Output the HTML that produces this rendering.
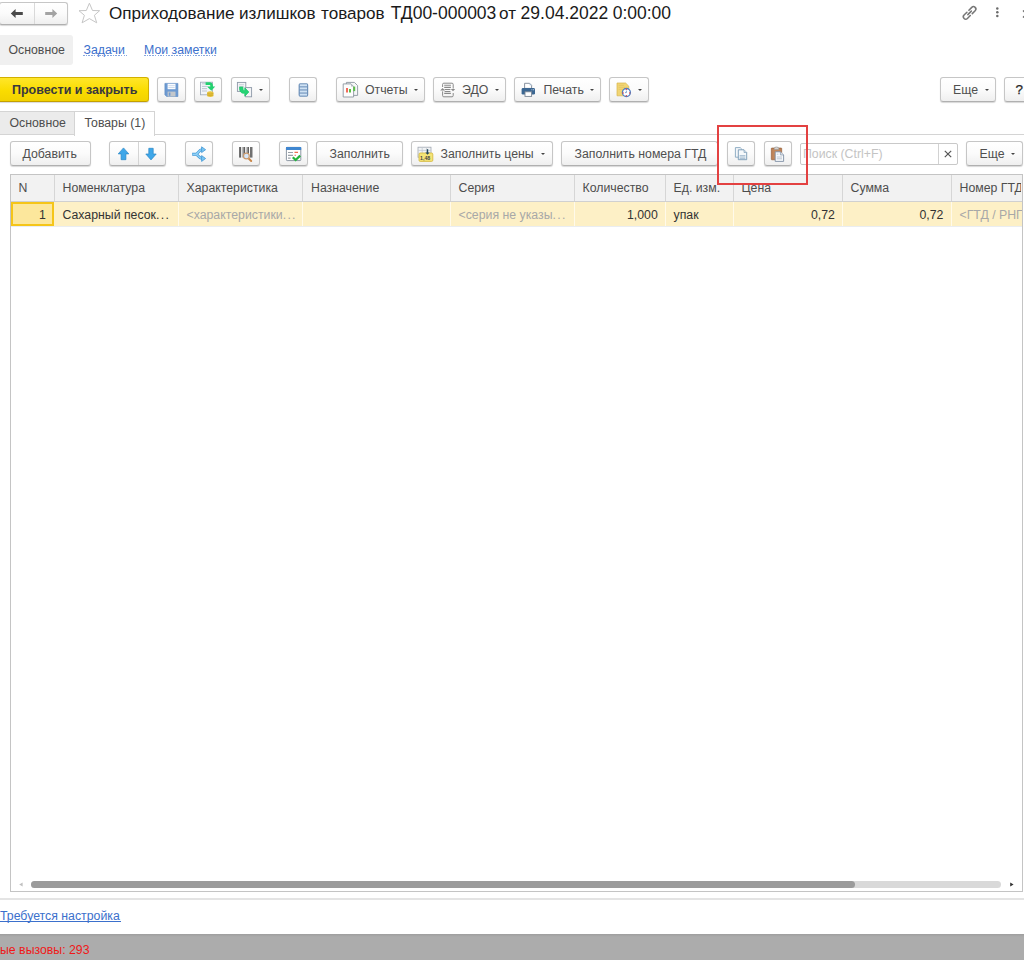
<!DOCTYPE html>
<html><head><meta charset="utf-8">
<style>
*{box-sizing:border-box;margin:0;padding:0}
html,body{width:1024px;height:960px;overflow:hidden;background:#fff}
body{position:relative;font-family:"Liberation Sans",sans-serif;font-size:12.3px;color:#4d4d4d}
.a{position:absolute;white-space:nowrap}
.t{position:absolute;white-space:nowrap;line-height:1}
.btn{position:absolute;height:25px;border:1px solid #c6c6c6;border-bottom-color:#b0b0b0;border-radius:3px;
 background:linear-gradient(#ffffff 0%,#fbfbfb 50%,#efefef 100%);box-shadow:0 1px 1px rgba(0,0,0,.16)}
.btn .lbl{position:absolute;top:0;line-height:24px;color:#4f4f4f}
.dd{position:absolute;width:0;height:0;border-left:2.2px solid transparent;border-right:2.2px solid transparent;border-top:2.6px solid #444}
.ic{position:absolute;overflow:visible}
.vl{position:absolute;width:1px;background:#dadada}
</style></head><body>
<!-- ===== Title bar ===== -->
<div class="btn" style="left:-1px;top:2px;width:69px;height:23px;border-radius:3px"></div>
<div class="vl" style="left:34px;top:3px;height:21px;background:#d9d9d9"></div>
<svg class="ic" style="left:10px;top:8px" width="14" height="11" viewBox="0 0 14 11"><path d="M.8 5.5 L5.6 1 V4.1 H12.8 V6.9 H5.6 V10 Z" fill="#4a4a4a"/></svg>
<svg class="ic" style="left:44px;top:8px" width="14" height="11" viewBox="0 0 14 11"><path d="M13.2 5.5 L8.4 1 V4.1 H1.2 V6.9 H8.4 V10 Z" fill="#a3a3a3"/></svg>
<svg class="ic" style="left:74px;top:0px" width="30" height="28" viewBox="0 0 30 28"><path d="M15.4 3.2 L18.5 10.5 L25.6 10.7 L20.4 15.3 L22.7 22.8 L15.4 18.6 L8.1 22.8 L10.4 15.3 L5 10.7 L12.3 10.5 Z" fill="none" stroke="#c6c6c6" stroke-width="1" stroke-linejoin="round"/></svg>
<div style="position:absolute;left:0;top:5px;font-size:17.4px;color:#1a1a1a"><div class="t tw" style="left:109px;font-size:17.1px">Оприходование</div><div class="t tw" style="left:239px;font-size:17.1px">излишков</div><div class="t tw" style="left:321px;font-size:17.1px">товаров</div><div class="t tw" style="left:390.7px;font-size:17.5px">ТД00-000003</div><div class="t tw" style="left:499.1px;font-size:17.1px">от</div><div class="t tw" style="left:520.6px;font-size:17.5px">29.04.2022</div><div class="t tw" style="left:612.7px;font-size:17.5px">0:00:00</div></div>
<svg class="ic" style="left:960px;top:4px" width="19" height="18" viewBox="0 0 19 18"><g transform="translate(9.6 8.9) rotate(-45) scale(0.88)" fill="none" stroke="#777" stroke-width="1.75" stroke-linecap="round"><path d="M-1.6 -2.7 H-6.2 A2.7 2.7 0 0 0 -6.2 2.7 H-1.6"/><path d="M1.6 -2.7 H6.2 A2.7 2.7 0 0 1 6.2 2.7 H1.6"/><path d="M-2.8 0 H2.8"/></g></svg>
<svg class="ic" style="left:995px;top:7px" width="5" height="11" viewBox="0 0 5 11"><g fill="#6b6b6b"><circle cx="2.3" cy="1.6" r="1.25"/><circle cx="2.3" cy="5.3" r="1.25"/><circle cx="2.3" cy="9" r="1.25"/></g></svg>
<svg class="ic" style="left:1022px;top:9px" width="8" height="10" viewBox="0 0 8 10"><path d="M1 1.5 L8 8.5 M8 1.5 L1 8.5" stroke="#6b6b6b" stroke-width="1.3"/></svg>

<!-- ===== Nav ===== -->
<div class="a" style="left:0;top:35px;width:73px;height:30px;background:#f0f0f0;border-radius:0 3px 3px 0"></div>
<div class="t" style="left:8.5px;top:44px;color:#4d4d4d">Основное</div>
<div class="t" style="left:83.5px;top:44px;color:#3b70cc">Задачи</div>
<div class="a" style="left:83px;top:55px;width:44px;height:1px;background:repeating-linear-gradient(90deg,#86a6e0 0 1.5px,transparent 1.5px 2.7px)"></div>
<div class="t" style="left:144px;top:44px;color:#3b70cc">Мои заметки</div>
<div class="a" style="left:144px;top:55px;width:72px;height:1px;background:repeating-linear-gradient(90deg,#86a6e0 0 1.5px,transparent 1.5px 2.7px)"></div>
<!-- ===== Command bar ===== -->
<div class="a" style="left:-3px;top:77px;width:152px;height:25px;border:1px solid #d2b000;border-bottom-color:#c4a000;border-radius:3px;background:linear-gradient(#ffe62a,#fadc00 55%,#f2d200);box-shadow:0 1px 1px rgba(0,0,0,.15)"></div>
<div class="a" style="left:12px;top:77.5px;line-height:24px;font-weight:bold;color:#38383f;font-size:12.5px">Провести и закрыть</div>

<div class="btn" style="left:157px;top:77px;width:29px"></div>
<svg class="ic" style="left:164px;top:83px" width="15" height="15" viewBox="0 0 15 15"><path d="M.9 .4 H13.9 V13.5 H2.6 L.9 11.8 Z" fill="#6d9ad2" stroke="#5786c0" stroke-width=".6"/><rect x="3.6" y=".8" width="7.9" height="5.4" fill="#fbfcfe"/><rect x="4.4" y="2.3" width="6.3" height=".8" fill="#c4d4e8"/><rect x="4.4" y="4" width="6.3" height=".8" fill="#c4d4e8"/><rect x="3.6" y="8.6" width="7.9" height="4.9" fill="#c3c7cb"/><rect x="4.8" y="9.5" width="1.6" height="3.3" fill="#6d9ad2"/></svg>

<div class="btn" style="left:194px;top:77px;width:28px"></div>
<svg class="ic" style="left:199px;top:81px" width="18" height="17" viewBox="0 0 18 17"><rect x="1.5" y="1.2" width="12" height="12.6" fill="#f2f5f9" stroke="#a3aebd" stroke-width=".9"/><g stroke="#b8c2ce" stroke-width=".9"><path d="M3 2.8H8M3 5.4H8M3 7.6H8M3 10H8"/></g><path d="M6.6 2.6 H10.6 Q12.6 2.6 12.6 4.8 V6.2" fill="none" stroke="#22d16f" stroke-width="2.6"/><path d="M8 5.4 H16.2 L12.3 9.8 Z" fill="#22d16f"/><path d="M8.2 11 Q11.3 9.6 14.4 11 V15.2 Q11.3 16.6 8.2 15.2 Z" fill="#e7c43d"/><path d="M8.2 12.5 Q11.3 13.6 14.4 12.5 M8.2 14 Q11.3 15.1 14.4 14" stroke="#c9a223" stroke-width=".7" fill="none"/></svg>

<div class="btn" style="left:231px;top:77px;width:39px"></div>
<svg class="ic" style="left:236px;top:81px" width="17" height="17" viewBox="0 0 17 17"><rect x="1.4" y="1.4" width="8.4" height="9" fill="#f3f4f6" stroke="#8e99a8" stroke-width=".9"/><path d="M3 3.6H8M3 5.4H8" stroke="#c5ccd4" stroke-width=".8"/><rect x="9.6" y="6.6" width="6" height="9.2" fill="#f3f4f6" stroke="#8e99a8" stroke-width=".9"/><path d="M3.6 6 C3.2 11.6 6.2 12.6 8.8 12.2 L8.8 15.2 L12.8 11 L8.8 6.8 L8.8 9.4 C7.4 9.8 6.9 9.2 6.9 6 Z" fill="#24d474" stroke="#22c46c" stroke-width=".8" stroke-linejoin="round"/></svg>
<div class="dd" style="left:259px;top:88.7px"></div>

<div class="btn" style="left:289px;top:77px;width:28px"></div>
<svg class="ic" style="left:298px;top:83px" width="11" height="14" viewBox="0 0 11 14"><rect x=".6" y=".3" width="9.6" height="13.4" rx="1.6" fill="#6f92ba"/><g fill="#cfe2f4"><rect x="1.8" y="1.3" width="7.2" height="2"/><rect x="1.8" y="4.4" width="7.2" height="2"/><rect x="1.8" y="7.5" width="7.2" height="2"/><rect x="1.8" y="10.6" width="7.2" height="2"/></g></svg>

<div class="btn" style="left:336px;top:77px;width:89px"><span class="lbl" style="left:28px">Отчеты</span></div>
<svg class="ic" style="left:342px;top:81px" width="17" height="18" viewBox="0 0 17 18"><path d="M4.4 1.4 H12.4 L15.6 4.6 V14.4 H4.4 Z" fill="#f6f7f8" stroke="#8c96a0" stroke-width=".9"/><path d="M1.2 2.9 H9 L11.6 5.5 V16 H1.2 Z" fill="#fdfdfd" stroke="#8c96a0" stroke-width=".9"/><path d="M9 2.9 V5.5 H11.6" fill="#b9c0c7"/><rect x="4" y="7" width="2" height="4.5" fill="#f26a5a"/><rect x="7" y="8" width="2" height="3.5" fill="#5cbf4a"/><rect x="11.2" y="5.6" width="2" height="4.5" fill="#5cbf4a"/></svg>
<div class="dd" style="left:414px;top:88.7px"></div>

<div class="btn" style="left:433px;top:77px;width:73px"><span class="lbl" style="left:28px">ЭДО</span></div>
<svg class="ic" style="left:440px;top:82px" width="16" height="16" viewBox="0 0 16 16"><g fill="none" stroke="#8a8a8a" stroke-width="1"><path d="M2.6 5 V2.4 Q2.6 1.2 3.8 1.2 H12 Q13.2 1.2 13.2 2.4 V6.6"/><path d="M13.2 11 V13.6 Q13.2 14.8 12 14.8 H3.8 Q2.6 14.8 2.6 13.6 V9.4"/></g><g stroke="#8a8a8a" stroke-width="1.1"><path d="M4.2 3.3H10.9M4.2 5.4H10.9M4.6 7.5H10.4M4.6 9.5H10.4M4.2 11.4H10.9"/></g><path d="M.2 8.4 L2.6 6 L5 8.4 Z" fill="#888"/><path d="M10.8 7 L15.2 7 L13 9.2 Z" fill="#888"/></svg>
<div class="dd" style="left:495px;top:88.7px"></div>

<div class="btn" style="left:514px;top:77px;width:87px"><span class="lbl" style="left:28.5px">Печать</span></div>
<svg class="ic" style="left:521px;top:82px" width="15" height="15" viewBox="0 0 15 15"><path d="M3.6 1.3 H8.6 L10.6 3.3 V6.4 H3.6 Z" fill="#fff" stroke="#7b8694" stroke-width=".9"/><path d="M8.6 1.3 V3.3 H10.6" fill="#9fb8d0"/><rect x=".6" y="6" width="13.4" height="6.6" rx="1.4" fill="#3c6792"/><rect x="10.4" y="7.4" width="1" height=".8" fill="#cfe0ef"/><rect x="12" y="7.4" width="1" height=".8" fill="#cfe0ef"/><rect x="4" y="9.8" width="6.6" height="4.6" fill="#fff" stroke="#7b8694" stroke-width=".9"/></svg>
<div class="dd" style="left:590px;top:88.7px"></div>

<div class="btn" style="left:609px;top:77px;width:40px"></div>
<svg class="ic" style="left:616px;top:82px" width="17" height="17" viewBox="0 0 17 17"><path d="M1 1 H9.6 L12.8 4.2 V13.8 H1 Z" fill="#f1d574" stroke="#d7b54c" stroke-width=".7"/><path d="M2.6 3.4H8M2.6 5.4H9M2.6 7.4H7" stroke="#e0c060" stroke-width=".6"/><circle cx="10.4" cy="10.5" r="4" fill="#fff" stroke="#4d7ec2" stroke-width="1.3"/><g fill="#e64848"><circle cx="10.4" cy="7.2" r=".75"/><circle cx="10.4" cy="13.8" r=".75"/><circle cx="7.1" cy="10.9" r=".75"/><circle cx="13.7" cy="10.9" r=".75"/></g><path d="M10.4 8.6 V10.6 H9" stroke="#4d7ec2" stroke-width=".7" fill="none"/></svg>
<div class="dd" style="left:638px;top:88.7px"></div>

<div class="btn" style="left:940px;top:77px;width:56px"><span class="lbl" style="left:12px">Еще</span></div>
<div class="dd" style="left:985px;top:88.7px"></div>
<div class="btn" style="left:1004px;top:77px;width:30px"><span class="lbl" style="left:10.6px;color:#262626;font-size:13.4px;-webkit-text-stroke:.25px #262626">?</span></div>
<!-- ===== Tabs ===== -->
<div class="a" style="left:0;top:134px;width:1024px;height:1px;background:#d4d4d4"></div>
<div class="a" style="left:0;top:111px;width:74px;height:24px;background:#ebebeb;border-top:1px solid #d4d4d4;border-bottom:1px solid #d4d4d4"></div>
<div class="t" style="left:9.5px;top:116.5px;color:#4d4d4d">Основное</div>
<div class="a" style="left:74px;top:111px;width:81px;height:25px;background:#fff;border:1px solid #d4d4d4;border-bottom:none"></div>
<div class="t" style="left:84.5px;top:116.5px;color:#4d4d4d">Товары (1)</div>

<!-- ===== Table toolbar ===== -->
<div class="btn" style="left:10px;top:141px;width:81px"><span class="lbl" style="left:11.5px">Добавить</span></div>

<div class="btn" style="left:109px;top:141px;width:57px"></div>
<div class="vl" style="left:138px;top:142px;height:23px;background:#d4d4d4"></div>
<svg class="ic" style="left:117px;top:147px" width="13" height="14" viewBox="0 0 13 14"><path d="M6.5 .9 L11.8 6.9 H8.9 V12.7 H4.1 V6.9 H1.2 Z" fill="#3fa7e9" stroke="#2a86c6" stroke-width=".7" stroke-linejoin="round"/></svg>
<svg class="ic" style="left:145px;top:147px" width="12" height="14" viewBox="0 0 12 14"><path d="M6 12.9 L11.2 7 H8.2 V1.3 H3.8 V7 H.8 Z" fill="#3fa7e9" stroke="#2a86c6" stroke-width=".7" stroke-linejoin="round"/></svg>

<div class="btn" style="left:185px;top:141px;width:28px"></div>
<svg class="ic" style="left:191px;top:146px" width="16" height="16" viewBox="0 0 16 16"><g fill="none" stroke-linecap="butt"><path d="M1.2 8.3 H4.6 C7.2 8.3 7.6 3.6 11.2 3.6 M4.6 8.3 C7.2 8.3 7.6 12.5 11.2 12.5" stroke="#3f97d6" stroke-width="2.9"/><path d="M1.6 8.3 H4.6 C7.2 8.3 7.6 3.6 11.2 3.6 M4.6 8.3 C7.2 8.3 7.6 12.5 11.2 12.5" stroke="#8fd0f6" stroke-width="1.5"/></g><path d="M10.6 .8 L14.6 3.7 L10.6 6.6 Z M10.6 9.6 L14.6 12.5 L10.6 15.4 Z" fill="#7cc6f2" stroke="#3f97d6" stroke-width=".8" stroke-linejoin="round"/></svg>

<div class="btn" style="left:232px;top:141px;width:28px"></div>
<svg class="ic" style="left:238px;top:146px" width="16" height="17" viewBox="0 0 16 17"><g fill="#4f4f4f"><rect x="1.2" y="1" width="1.7" height="10.6"/><rect x="3.8" y="1" width=".8" height="10.6" fill="#8a8a8a"/><rect x="5.4" y="1" width="1.5" height="10.6"/><rect x="7.8" y="1" width=".7" height="10.6" fill="#8a8a8a"/><rect x="9.4" y="1" width="1.5" height="10.6"/><rect x="12.2" y="1" width="1.6" height="10.6"/><rect x="14.4" y="1" width=".6" height="10.6" fill="#8a8a8a"/></g><path d="M10.2 12 L13.2 15" stroke="#c98546" stroke-width="2" stroke-linecap="round"/><circle cx="8.4" cy="10" r="2.9" fill="#d6e6f8" stroke="#c99a6e" stroke-width="1.2"/></svg>

<div class="btn" style="left:279px;top:141px;width:29px"></div>
<svg class="ic" style="left:285px;top:146px" width="17" height="16" viewBox="0 0 17 16"><rect x="1.4" y="1.4" width="14.4" height="13.2" rx=".8" fill="#fff" stroke="#7f8b99" stroke-width=".9"/><rect x="1" y="1" width="15.2" height="3" fill="#3f86d0"/><g stroke="#9aa1a9" stroke-width="1.1"><path d="M3 6.5H8M3 9.4H8M3 12.1H5.6"/></g><path d="M9.5 6.4H13M9.5 9.2H11" stroke="#ec6e50" stroke-width="1.1"/><path d="M7.8 11.2 L10.6 14 L15.2 9.6" fill="none" stroke="#24b33c" stroke-width="2.3"/></svg>

<div class="btn" style="left:316px;top:141px;width:87px"><span class="lbl" style="left:12.5px">Заполнить</span></div>

<div class="btn" style="left:411px;top:141px;width:142px"><span class="lbl" style="left:28.5px">Заполнить цены</span></div>
<svg class="ic" style="left:417px;top:146px" width="17" height="17" viewBox="0 0 17 17"><rect x="1" y="1.2" width="13" height="10" fill="#f2f4f6" stroke="#a0a8b2" stroke-width=".8"/><path d="M1 4.4H14M5.2 1.2V11M9.6 1.2V11" stroke="#c3c9d0" stroke-width=".8"/><rect x="2" y="7" width="13.8" height="8.4" rx="1.2" fill="#f5e477" stroke="#d2b63a" stroke-width=".8"/><text x="3.1" y="13.6" font-size="5.2" font-weight="bold" font-family="Liberation Sans" fill="#444">1,48</text><path d="M10.5 3.2 V7.2" stroke="#24485c" stroke-width="1.4"/><path d="M8.4 6.4 L12.6 6.4 L10.5 8.8 Z" fill="#24485c"/></svg>
<div class="dd" style="left:541px;top:153px"></div>

<div class="btn" style="left:561px;top:141px;width:157px"><span class="lbl" style="left:12.5px">Заполнить номера ГТД</span></div>

<div class="btn" style="left:727px;top:141px;width:28px"></div>
<svg class="ic" style="left:734px;top:146px" width="15" height="16" viewBox="0 0 15 16"><path d="M1.4 1.6 H6.2 L7.8 3.2 V11.2 H1.4 Z" fill="#f4f7fa" stroke="#86a6bf" stroke-width=".9"/><path d="M4.3 3.8 H10 L12.7 6.5 V13.7 H4.3 Z" fill="#f6f9fb" stroke="#7597b3" stroke-width=".9"/><path d="M10 3.8 V6.5 H12.7" fill="#cfdde8" stroke="#7597b3" stroke-width=".6"/><path d="M5.6 9.6H11.4M5.6 11H11.4M5.6 12.4H11.4" stroke="#93afc6" stroke-width=".8"/></svg>

<div class="btn" style="left:764px;top:141px;width:28px"></div>
<svg class="ic" style="left:770px;top:146px" width="16" height="17" viewBox="0 0 16 17"><rect x="1.3" y="2" width="10.4" height="11.8" rx=".6" fill="#b97b4f" stroke="#8e5a35" stroke-width=".6"/><rect x="2.3" y="3" width="8.4" height="9.8" fill="#c2875a"/><path d="M4.2 2.6 Q4.2 1 6.5 1 Q8.8 1 8.8 2.6 V3.4 H4.2 Z" fill="#d8d8d8" stroke="#8f8f8f" stroke-width=".6"/><path d="M5.2 5.8 H10.4 L13.6 9 V15.4 H5.2 Z" fill="#f7f9fb" stroke="#7e8fa4" stroke-width=".9"/><path d="M10.4 5.8 V9 H13.6" fill="#d5dde6" stroke="#7e8fa4" stroke-width=".6"/><path d="M6.8 8.2H8.4M6.8 11H12M6.8 12.8H12" stroke="#a6b3c2" stroke-width=".7"/></svg>

<!-- search -->
<div class="a" style="left:800px;top:142.5px;width:158px;height:22.5px;border:1px solid #c9c9c9;border-radius:2px;background:#fff"></div>
<div class="vl" style="left:938px;top:143.5px;height:20.5px;background:#d2d2d2"></div>
<div class="t" style="left:803px;top:147.5px;color:#c4c4c4">Поиск (Ctrl+F)</div>
<svg class="ic" style="left:944px;top:150px" width="8" height="8" viewBox="0 0 8 8"><path d="M.8 .8 L7.2 7.2 M7.2 .8 L.8 7.2" stroke="#555" stroke-width="1.2"/></svg>

<div class="btn" style="left:966px;top:141px;width:57px"><span class="lbl" style="left:12.5px">Еще</span></div>
<div class="dd" style="left:1011px;top:153px"></div>
<!-- ===== Table ===== -->
<div class="a" style="left:10px;top:174px;width:1013px;height:718px;border:1px solid #c4c4c4;background:#fff"></div>
<div class="a" style="left:11px;top:175px;width:1011px;height:27px;background:#f2f2f2;border-bottom:1px solid #d0d0d0"></div>
<div class="a" style="left:11px;top:202px;width:1011px;height:25px;background:#fdf0c6;border-bottom:1px solid #eaedf0"></div>
<div class="vl" style="left:54px;top:175px;height:26px;background:#d6d6d6"></div>
<div class="vl" style="left:178px;top:175px;height:26px;background:#d6d6d6"></div>
<div class="vl" style="left:302px;top:175px;height:26px;background:#d6d6d6"></div>
<div class="vl" style="left:450px;top:175px;height:26px;background:#d6d6d6"></div>
<div class="vl" style="left:574px;top:175px;height:26px;background:#d6d6d6"></div>
<div class="vl" style="left:665px;top:175px;height:26px;background:#d6d6d6"></div>
<div class="vl" style="left:733px;top:175px;height:26px;background:#d6d6d6"></div>
<div class="vl" style="left:842px;top:175px;height:26px;background:#d6d6d6"></div>
<div class="vl" style="left:951px;top:175px;height:26px;background:#d6d6d6"></div>
<div class="vl" style="left:178px;top:202px;height:24px;background:#fffaea"></div>
<div class="vl" style="left:302px;top:202px;height:24px;background:#fffaea"></div>
<div class="vl" style="left:450px;top:202px;height:24px;background:#fffaea"></div>
<div class="vl" style="left:574px;top:202px;height:24px;background:#fffaea"></div>
<div class="vl" style="left:665px;top:202px;height:24px;background:#fffaea"></div>
<div class="vl" style="left:733px;top:202px;height:24px;background:#fffaea"></div>
<div class="vl" style="left:842px;top:202px;height:24px;background:#fffaea"></div>
<div class="vl" style="left:951px;top:202px;height:24px;background:#fffaea"></div>
<div class="a" style="left:11px;top:202px;width:43px;height:24px;border:2px solid #f5c518;background:#fce79c"></div>

<div class="t" style="left:18.5px;top:182px">N</div>
<div class="t" style="left:62.5px;top:182px">Номенклатура</div>
<div class="t" style="left:186.5px;top:182px">Характеристика</div>
<div class="t" style="left:311px;top:182px">Назначение</div>
<div class="t" style="left:458.5px;top:182px">Серия</div>
<div class="t" style="left:582.5px;top:182px">Количество</div>
<div class="t" style="left:673.5px;top:182px">Ед. изм.</div>
<div class="t" style="left:741.5px;top:182px">Цена</div>
<div class="t" style="left:850.5px;top:182px">Сумма</div>
<div class="a" style="left:952px;top:175px;width:69px;height:26px;overflow:hidden"><div class="t" style="left:7.5px;top:7px">Номер ГТД</div></div>

<div class="t" style="left:39px;top:208.5px;color:#333">1</div>
<div class="t" style="left:62.5px;top:208.5px;color:#333">Сахарный песок<span style="letter-spacing:1.3px">...</span></div>
<div class="t" style="left:186.5px;top:208.5px;color:#a8a8a8">&lt;характеристики<span style="letter-spacing:1.3px">...</span></div>
<div class="t" style="left:458.5px;top:208.5px;color:#a8a8a8">&lt;серия не указы<span style="letter-spacing:1.3px">...</span></div>
<div class="t" style="left:627px;top:208.5px;color:#333">1,000</div>
<div class="t" style="left:673.5px;top:208.5px;color:#333">упак</div>
<div class="t" style="left:811px;top:208.5px;color:#333">0,72</div>
<div class="t" style="left:919.5px;top:208.5px;color:#333">0,72</div>
<div class="a" style="left:959px;top:202px;width:63px;height:24px;overflow:hidden"><div class="t" style="left:.5px;top:6.5px;color:#a8a8a8">&lt;ГТД / РНПТ&gt;</div></div>

<!-- scrollbar -->
<div class="a" style="left:31px;top:881px;width:970px;height:7px;border-radius:3.5px;background:#d9d9d9"></div>
<div class="a" style="left:31px;top:881px;width:824px;height:7px;border-radius:3.5px;background:#9b9b9b"></div>
<svg class="ic" style="left:18px;top:881px" width="6" height="7" viewBox="0 0 6 7"><path d="M1.2 3.5 L4.6 1.4 V5.6 Z" fill="#c0c0c0"/></svg>
<svg class="ic" style="left:1009px;top:881px" width="6" height="7" viewBox="0 0 6 7"><path d="M4.6 3.5 L1.2 1.4 V5.6 Z" fill="#333"/></svg>

<!-- ===== Footer ===== -->
<div class="a" style="left:0;top:898px;width:1024px;height:2px;background:#e4e4e4"></div>
<div class="t" style="left:0;top:910px;color:#3b70cc">Требуется настройка</div>
<div class="a" style="left:0;top:921px;width:121px;height:1px;background:#3b70cc"></div>
<div class="a" style="left:0;top:934px;width:1024px;height:26px;background:linear-gradient(#9e9e9e,#a8a8a8 2px,#acacac 3px)"></div>
<div class="t" style="left:0;top:943.5px;color:#f01818">ые вызовы: 293</div>

<!-- red highlight -->
<div class="a" style="left:716.5px;top:125px;width:91px;height:60.3px;border:2.6px solid #e34141"></div>
</body></html>
